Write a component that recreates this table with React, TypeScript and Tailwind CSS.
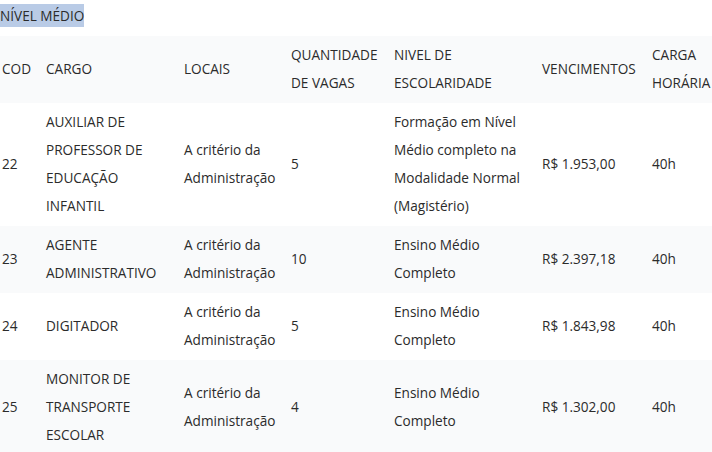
import React from "react";

const rows = [
  {
    cod: "22",
    cargo: ["AUXILIAR DE", "PROFESSOR DE", "EDUCAÇÃO", "INFANTIL"],
    qtd: "5",
    nivel: ["Formação em Nível", "Médio completo na", "Modalidade Normal", "(Magistério)"],
    venc: "R$ 1.953,00",
    gray: false,
  },
  {
    cod: "23",
    cargo: ["AGENTE", "ADMINISTRATIVO"],
    qtd: "10",
    nivel: ["Ensino Médio", "Completo"],
    venc: "R$ 2.397,18",
    gray: true,
  },
  {
    cod: "24",
    cargo: ["DIGITADOR"],
    qtd: "5",
    nivel: ["Ensino Médio", "Completo"],
    venc: "R$ 1.843,98",
    gray: false,
  },
  {
    cod: "25",
    cargo: ["MONITOR DE", "TRANSPORTE", "ESCOLAR"],
    qtd: "4",
    nivel: ["Ensino Médio", "Completo"],
    venc: "R$ 1.302,00",
    gray: true,
  },
];

function Lines({ lines }: { lines: string[] }) {
  return (
    <>
      {lines.map((l, i) => (
        <React.Fragment key={i}>
          {i > 0 && <br />}
          {l}
        </React.Fragment>
      ))}
    </>
  );
}

const td = "pl-[2px] pt-[5px] pb-[6px] align-middle text-left font-normal";

export default function App() {
  return (
    <div
      className="w-[712px] h-[452px] overflow-hidden bg-white text-[#2b2b2b] text-[13.6px] leading-[28px]"
      style={{ fontFamily: '"Open Sans", "Noto Sans", sans-serif' }}
    >
      <div className="h-[36px] pt-[2px]">
        <span className="bg-[#b9cbe6] leading-[23px] inline-block">NÍVEL MÉDIO</span>
      </div>
      <table className="w-[712px] table-fixed">
        <colgroup>
          <col className="w-[44px]" />
          <col className="w-[138px]" />
          <col className="w-[107px]" />
          <col className="w-[103px]" />
          <col className="w-[148px]" />
          <col className="w-[110px]" />
          <col className="w-[62px]" />
        </colgroup>
        <thead>
          <tr className="bg-[#f9fafb]">
            <th className={td}>COD</th>
            <th className={td}>CARGO</th>
            <th className={td}>LOCAIS</th>
            <th className={td}>
              QUANTIDADE
              <br />
              DE VAGAS
            </th>
            <th className={td}>
              NIVEL DE
              <br />
              ESCOLARIDADE
            </th>
            <th className={td}>VENCIMENTOS</th>
            <th className={`${td} whitespace-nowrap`}>
              CARGA
              <br />
              HORÁRIA
            </th>
          </tr>
        </thead>
        <tbody>
          {rows.map((r) => (
            <tr key={r.cod} className={r.gray ? "bg-[#f9fafb]" : "bg-white"}>
              <td className={td}>{r.cod}</td>
              <td className={td}>
                <Lines lines={r.cargo} />
              </td>
              <td className={td}>
                A critério da
                <br />
                Administração
              </td>
              <td className={td}>{r.qtd}</td>
              <td className={`${td} whitespace-nowrap`}>
                <Lines lines={r.nivel} />
              </td>
              <td className={`${td} whitespace-nowrap`}>{r.venc}</td>
              <td className={td}>40h</td>
            </tr>
          ))}
        </tbody>
      </table>
    </div>
  );
}
